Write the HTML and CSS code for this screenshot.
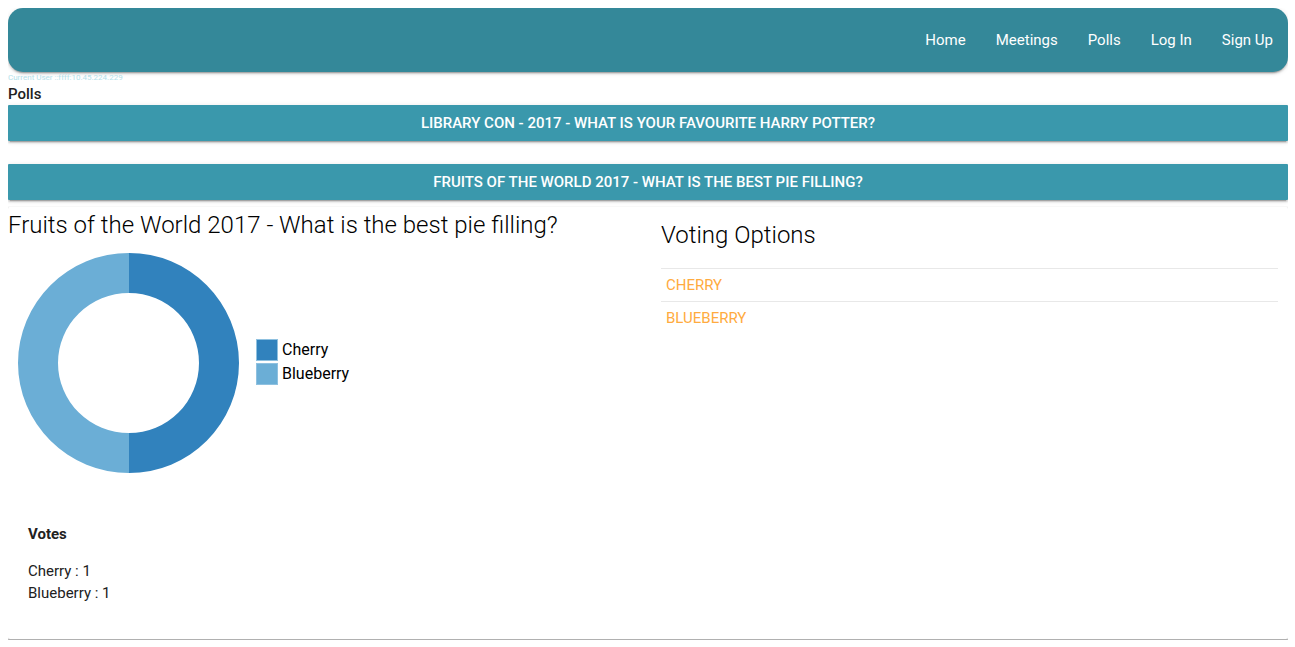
FILE: index.html
```html
<!DOCTYPE html>
<html lang="en">
<head>
<meta charset="utf-8">
<title>Polls</title>
<link rel="stylesheet" href="styles.css">
</head>
<body>
<nav class="navbar">
  <ul class="nav-links">
    <li><a href="#home">Home</a></li>
    <li><a href="#meetings">Meetings</a></li>
    <li><a href="#polls">Polls</a></li>
    <li><a href="#login">Log In</a></li>
    <li><a href="#signup">Sign Up</a></li>
  </ul>
</nav>
<p class="current-user">Current User ::ffff:10.45.224.229</p>
<main>
  <h1 class="page-title">Polls</h1>
  <div class="polls">
    <button type="button" class="poll-button">Library Con - 2017 - What is your favourite Harry Potter?</button>
    <button type="button" class="poll-button">Fruits of the World 2017 - What is the best pie filling?</button>
  </div>
  <section class="panel">
    <div class="results">
      <h2 class="panel-title">Fruits of the World 2017 - What is the best pie filling?</h2>
      <div class="chart">
        <svg class="donut" viewBox="0 0 222 222" role="img" aria-label="Cherry 1, Blueberry 1">
          <path fill="#3182bd" d="M111 1A110 110 0 0 1 111 221V181A70 70 0 0 0 111 41Z"/>
          <path fill="#6baed6" d="M111 1A111 110 0 0 0 111 221V181A71 70 0 0 1 111 41Z"/>
        </svg>
        <ul class="legend">
          <li><span class="swatch swatch-cherry"></span>Cherry</li>
          <li><span class="swatch swatch-blueberry"></span>Blueberry</li>
        </ul>
      </div>
      <div class="votes">
        <h3 class="votes-title">Votes</h3>
        <p>Cherry : 1</p>
        <p>Blueberry : 1</p>
      </div>
    </div>
    <div class="voting">
      <h2 class="voting-title">Voting Options</h2>
      <ul class="options">
        <li><a href="#cherry">Cherry</a></li>
        <li><a href="#blueberry">Blueberry</a></li>
      </ul>
    </div>
  </section>
</main>
</body>
</html>
```
FILE: styles.css
```css
* { box-sizing: border-box; }
body {
  margin: 8px 7px 8px 8px;
  background: #fff;
  color: #212121;
  font: 15px/22px Roboto, sans-serif;
}
h1, h2, h3, p, ul { margin: 0; padding: 0; }
ul { list-style: none; }
a { text-decoration: none; }

.navbar, .poll-button {
  box-shadow: 0 2px 2px 0 rgba(0, 0, 0, .14), 0 1px 5px 0 rgba(0, 0, 0, .12), 0 3px 1px -2px rgba(0, 0, 0, .2);
}
.navbar {
  border-radius: 15px;
  background: #348899;
}
.nav-links { display: flex; justify-content: flex-end; }
.nav-links a {
  display: block;
  padding: 0 15px;
  color: #fff;
  line-height: 64px;
}
.current-user {
  color: #b4e1ea;
  font-size: 8px;
  line-height: 11px;
}
.page-title {
  font-size: 15px;
  font-weight: 500;
  line-height: 22px;
}
.polls { display: grid; gap: 23px; }
.poll-button {
  width: 100%;
  height: 36px;
  padding: 0 30px;
  border: 0;
  border-radius: 1px;
  background: #3a98ac;
  color: #fff;
  font: 500 15px/36px Roboto, sans-serif;
  text-transform: uppercase;
  cursor: pointer;
}
.panel {
  display: grid;
  grid-template-columns: 1fr 1fr;
  margin: 6px -1px 0;
  padding-bottom: 35px;
  border: 1px solid #e2e2e2;
  border-top-color: #f8f8f8;
  border-bottom-color: #b0b0b0;
  border-radius: 3px;
  background: #fff;
  box-shadow: 0 1px 1px #d0d0d0;
}
.panel-title, .voting-title {
  color: #000;
  font-size: 24px;
  font-weight: 300;
  line-height: 36px;
}
.chart {
  display: flex;
  align-items: center;
  gap: 16px;
  margin: 9px 0 0 10px;
  color: #000;
  font-size: 16px;
}
.donut { width: 222px; height: 222px; }
.legend { display: grid; gap: 2px; margin-top: -3px; }
.legend li { display: flex; align-items: center; gap: 4px; }
.swatch { width: 22px; height: 22px; border: 1px solid #8fc1e0; }
.swatch-cherry { background: #3182bd; }
.swatch-blueberry { background: #6baed6; }
.votes { padding: 49px 20px 0; }
.votes-title {
  margin-bottom: 15px;
  font-size: 15px;
  font-weight: 700;
  line-height: 22px;
}
.voting { padding: 10px 10px 0 13px; }
.voting-title { margin-bottom: 15px; }
.options li {
  padding: 5px;
  border-top: 1px solid #e8e8e8;
}
.options a { color: #ffab40; text-transform: uppercase; }
```
